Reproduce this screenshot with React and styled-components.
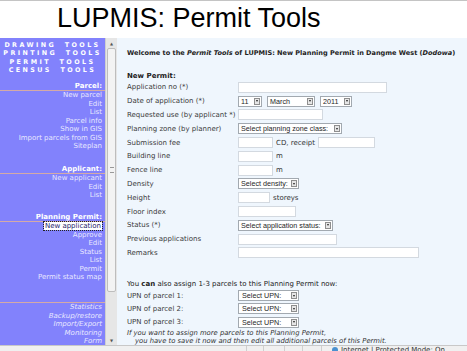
import React from 'react';
import styled, { createGlobalStyle } from 'styled-components';

const GlobalStyle = createGlobalStyle`
  html, body {
    margin: 0;
    padding: 0;
    overflow: hidden;
    background: #ffffff;
  }
  body {
    font-family: "DejaVu Sans", Verdana, sans-serif;
  }
`;

const Page = styled.div`
  width: 467px;
  height: 351px;
  display: flex;
  flex-direction: column;
  overflow: hidden;
`;

const Header = styled.div`
  height: 38px;
  flex: none;
  box-sizing: border-box;
  border-top: 1px solid #c4c4c4;
  padding: 4px 0 0 57px;
  background: #ffffff;
`;

const Title = styled.h1`
  margin: 0;
  font-family: "Liberation Sans", Arial, sans-serif;
  font-weight: normal;
  font-size: 27px;
  line-height: 27px;
  color: #000;
`;

const Frame = styled.div`
  height: 307px;
  flex: none;
  display: flex;
`;

const Sidebar = styled.nav`
  width: 105px;
  flex: none;
  background: #8282fc;
  color: #ffffff;
  font-size: 7px;
  overflow: hidden;
`;

const ToolsBlock = styled.div`
  padding-top: 3px;
  text-align: center;
  font-weight: bold;
  font-size: 6.4px;
  line-height: 8.3px;
  letter-spacing: 2.4px;
  word-spacing: 4px;
`;

const Section = styled.div`
  margin-top: ${p => p.$gap}px;
`;

const SectionHead = styled.div`
  height: 8px;
  line-height: 8px;
  text-align: right;
  font-weight: bold;
  padding-right: 3px;
  border-bottom: 1px solid #d4aaa6;
`;

const NavLink = styled.div`
  line-height: 8.5px;
  height: 8.5px;
  text-align: right;
  padding-right: 3px;
  color: #e8e8ff;
  font-style: ${p => (p.$italic ? 'italic' : 'normal')};
  white-space: nowrap;
`;

const ActiveLink = styled.span`
  background: #ffffff;
  color: #22226a;
  outline: 1px dotted #222;
  padding: 0 1px;
`;

const ScrollTrack = styled.div`
  width: 12px;
  flex: none;
  box-sizing: border-box;
  background: #e6e6e6;
  border-left: 1px solid #cfcfcf;
  display: flex;
  flex-direction: column;
  align-items: center;
`;

const ScrollArrow = styled.div`
  height: 10px;
  width: 100%;
  display: flex;
  align-items: center;
  justify-content: center;
  font-size: 4px;
  color: #555;
  margin-top: ${p => (p.$bottom ? 'auto' : '0')};
`;

const Thumb = styled.div`
  width: 9px;
  height: 244px;
  box-sizing: border-box;
  background: #f3f3f3;
  border: 1px solid #bdbdbd;
  border-radius: 2px;
  display: flex;
  align-items: center;
  justify-content: center;
`;

const Grip = styled.div`
  width: 4px;
  height: 4px;
  border-top: 1px solid #999;
  border-bottom: 1px solid #999;
`;

const Main = styled.main`
  flex: 1;
  background: #eff6fd;
  padding: 10.5px 0 0 10px;
  color: #333;
  font-size: 7px;
  overflow: hidden;
`;

const Welcome = styled.div`
  font-weight: bold;
  font-size: 6.55px;
  line-height: 9px;
  white-space: nowrap;
  color: #222;
`;

const BlockTitle = styled.div`
  margin-top: 14px;
  font-weight: bold;
  line-height: 9px;
  color: #222;
`;

const FormGrid = styled.div`
  display: grid;
  grid-template-columns: 111px 1fr;
  grid-auto-rows: ${p => p.$row}px;
  align-items: center;
`;

const Label = styled.div`
  white-space: nowrap;
  color: #3a3a3a;
`;

const Field = styled.div`
  display: flex;
  align-items: center;
  gap: ${p => p.$gap || 3}px;
`;

const TextInput = styled.input`
  width: ${p => p.$w}px;
  height: 11px;
  box-sizing: border-box;
  margin: 0;
  padding: 0;
  border: 1px solid #d3d9e0;
  background: #ffffff;
`;

const SelectBox = styled.div`
  width: ${p => p.$w}px;
  height: 11px;
  box-sizing: border-box;
  display: flex;
  align-items: center;
  padding: 0 1px 0 ${p => p.$pad || 2}px;
  border: 1px solid #a2a9b0;
  background: #ffffff;
  font-family: "Liberation Sans", Arial, sans-serif;
  font-size: 7.2px;
  color: #1e1e1e;
  white-space: nowrap;
`;

const DropBtn = styled.span`
  margin-left: auto;
  width: 6px;
  height: 7px;
  box-sizing: border-box;
  border: 1px solid #8e8e8e;
  background: #e6e6e6;
  display: flex;
  align-items: center;
  justify-content: center;
  &::after {
    content: '';
    border-left: 1.5px solid transparent;
    border-right: 1.5px solid transparent;
    border-top: 2px solid #222;
  }
`;

const Note = styled.div`
  margin-top: 20px;
  line-height: 9px;
  white-space: nowrap;
  color: #222;
`;

const Hint = styled.div`
  font-style: italic;
  font-size: 6.8px;
  line-height: 8.3px;
  white-space: nowrap;
  color: #333;
  padding-left: ${p => p.$indent || 0}px;
`;

const StatusBar = styled.footer`
  flex: none;
  height: 20px;
  box-sizing: border-box;
  border-top: 1px solid #c8c8c8;
  background: #f0f0f0;
  display: flex;
  padding-left: 246px;
`;

const StatusCell = styled.div`
  width: ${p => p.$w}px;
  border-left: 1px solid #cfcfcf;
  font-size: 7px;
  color: #333;
  display: flex;
  align-items: flex-start;
  gap: 3px;
  padding-left: ${p => p.$pad || 0}px;
`;

const Globe = styled.span`
  width: 6px;
  height: 6px;
  border-radius: 50%;
  background: #4a90d0;
  margin-top: 1px;
`;

const Select = ({ w, children, pad }) => (
  <SelectBox $w={w} $pad={pad}>
    {children}
    <DropBtn />
  </SelectBox>
);

const navSections = [
  { head: 'Parcel:', gap: 8, links: ['New parcel', 'Edit', 'List', 'Parcel info', 'Show in GIS', 'Import parcels from GIS', 'Siteplan'] },
  { head: 'Applicant:', gap: 14.5, links: ['New applicant', 'Edit', 'List'] },
  { head: 'Planning Permit:', gap: 13.5, links: ['New application', 'Approve', 'Edit', 'Status', 'List', 'Permit', 'Permit status map'], active: 'New application' },
  { head: '', gap: 12.5, links: ['Statistics', 'Backup/restore', 'Import/Export', 'Monitoring', 'Form'], italic: true },
];

export default function App() {
  return (
    <Page>
      <GlobalStyle />
      <Header>
        <Title>LUPMIS: Permit Tools</Title>
      </Header>
      <Frame>
        <Sidebar>
          <ToolsBlock>
            <div>DRAWING TOOLS</div>
            <div>PRINTING TOOLS</div>
            <div>PERMIT TOOLS</div>
            <div>CENSUS TOOLS</div>
          </ToolsBlock>
          {navSections.map((s, i) => (
            <Section key={i} $gap={s.gap}>
              <SectionHead>{s.head}</SectionHead>
              {s.links.map((l, j) => (
                <NavLink key={j} $italic={s.italic}>
                  {l === s.active ? <ActiveLink>{l}</ActiveLink> : l}
                </NavLink>
              ))}
            </Section>
          ))}
        </Sidebar>
        <ScrollTrack>
          <ScrollArrow>▲</ScrollArrow>
          <Thumb><Grip /></Thumb>
          <ScrollArrow $bottom>▼</ScrollArrow>
        </ScrollTrack>
        <Main>
          <Welcome>
            Welcome to the <i>Permit Tools</i> of LUPMIS: New Planning Permit in Dangme West (<i>Dodowa</i>)
          </Welcome>
          <BlockTitle>New Permit:</BlockTitle>
          <FormGrid $row={13.8}>
            <Label>Application no (*)</Label>
            <Field><TextInput $w={149} /></Field>

            <Label>Date of application (*)</Label>
            <Field $gap={5}>
              <Select w={24}>11</Select>
              <Select w={48}>March</Select>
              <Select w={32}>2011</Select>
            </Field>

            <Label>Requested use (by applicant *)</Label>
            <Field><TextInput $w={85} /></Field>

            <Label>Planning zone (by planner)</Label>
            <Field><Select w={104}>Select planning zone class:</Select></Field>

            <Label>Submission fee</Label>
            <Field>
              <TextInput $w={35} />
              <span>CD, receipt</span>
              <TextInput $w={57} />
            </Field>

            <Label>Building line</Label>
            <Field><TextInput $w={35} /><span>m</span></Field>

            <Label>Fence line</Label>
            <Field><TextInput $w={35} /><span>m</span></Field>

            <Label>Density</Label>
            <Field><Select w={61}>Select density:</Select></Field>

            <Label>Height</Label>
            <Field><TextInput $w={32} /><span>storeys</span></Field>

            <Label>Floor index</Label>
            <Field><TextInput $w={58} /></Field>

            <Label>Status (*)</Label>
            <Field><Select w={95}>Select application status:</Select></Field>

            <Label>Previous applications</Label>
            <Field><TextInput $w={99} /></Field>

            <Label>Remarks</Label>
            <Field><TextInput $w={181} /></Field>
          </FormGrid>

          <Note>You <b>can</b> also assign 1-3 parcels to this Planning Permit now:</Note>
          <FormGrid $row={13.3}>
            {[1, 2, 3].map(n => (
              <React.Fragment key={n}>
                <Label>UPN of parcel {n}:</Label>
                <Field><Select w={61} pad={3}>Select UPN:</Select></Field>
              </React.Fragment>
            ))}
          </FormGrid>
          <Hint>If you want to assign more parcels to this Planning Permit,</Hint>
          <Hint $indent={8}>you have to save it now and then edit all additional parcels of this Permit.</Hint>
        </Main>
      </Frame>
      <StatusBar>
        <StatusCell $w={16} />
        <StatusCell $w={20} />
        <StatusCell $w={17} />
        <StatusCell $w={18} />
        <StatusCell $w={120} $pad={10}><Globe />Internet | Protected Mode: On</StatusCell>
      </StatusBar>
    </Page>
  );
}
